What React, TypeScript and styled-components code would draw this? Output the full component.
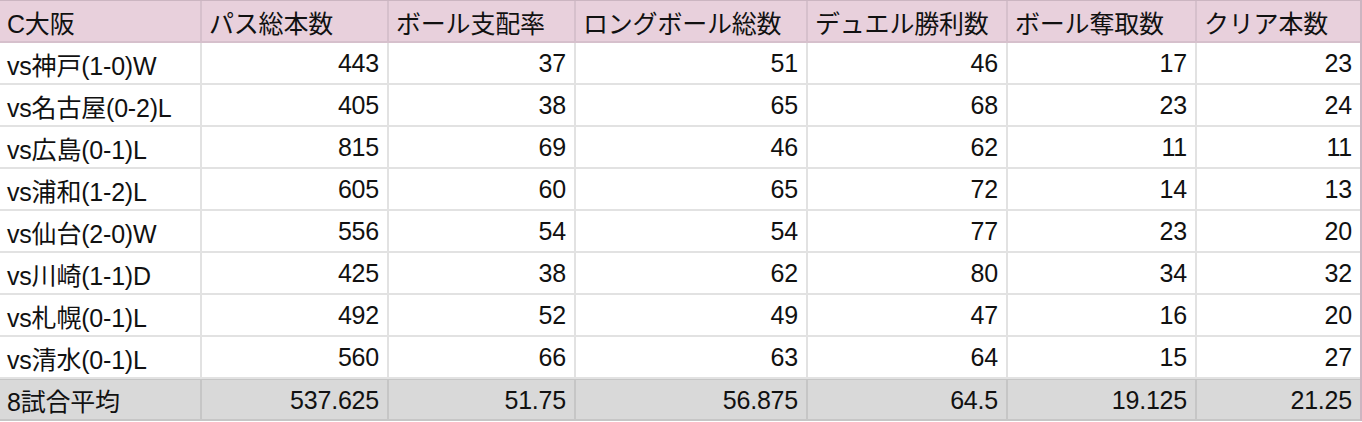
import styled, { createGlobalStyle } from "styled-components";

const GlobalStyle = createGlobalStyle`
  body {
    margin: 0;
    background: #ffffff;
    font-family: "Liberation Sans", "Noto Sans CJK JP", sans-serif;
  }
`;

const columns = [202, 187, 187, 232, 200, 189, 163];

const headers = ["C大阪", "パス総本数", "ボール支配率", "ロングボール総数", "デュエル勝利数", "ボール奪取数", "クリア本数"];

const rows: (string | number)[][] = [
    ["vs神戸(1-0)W", 443, 37, 51, 46, 17, 23],
    ["vs名古屋(0-2)L", 405, 38, 65, 68, 23, 24],
    ["vs広島(0-1)L", 815, 69, 46, 62, 11, 11],
    ["vs浦和(1-2)L", 605, 60, 65, 72, 14, 13],
    ["vs仙台(2-0)W", 556, 54, 54, 77, 23, 20],
    ["vs川崎(1-1)D", 425, 38, 62, 80, 34, 32],
    ["vs札幌(0-1)L", 492, 52, 49, 47, 16, 20],
    ["vs清水(0-1)L", 560, 66, 63, 64, 15, 27],
];

const average = ["8試合平均", "537.625", "51.75", "56.875", "64.5", "19.125", "21.25"];

const Sheet = styled.div({
    display: 'grid',
    gridTemplateColumns: columns.map(c => `${c}px`).join(' '),
    width: '1360px',
    borderTop: '1px solid #cbb5c1',
    borderRight: '2px solid #cbb5c1',
})

type Variant = 'head' | 'body' | 'total';

interface ICellProps {
    variant: Variant;
    numeric?: boolean;
    last?: boolean;
}

const backgrounds: Record<Variant, string> = {
    head: '#e8d0dc',
    body: '#ffffff',
    total: '#d9d9d9',
}

const lines: Record<Variant, string> = {
    head: '#d6c0cc',
    body: '#e2e2e2',
    total: '#c6c6c6',
}

const Cell = styled.div<ICellProps>(({ variant, numeric, last }: ICellProps) => ({
    height: '42px',
    boxSizing: 'border-box',
    display: 'flex',
    alignItems: 'center',
    justifyContent: numeric ? 'flex-end' : 'flex-start',
    padding: numeric ? '1px 8px 0 6px' : '1px 6px 0 7px',
    fontSize: '25px',
    letterSpacing: '-0.2px',
    color: '#111111',
    whiteSpace: 'nowrap',
    backgroundColor: backgrounds[variant],
    borderBottom: `2px solid ${lines[variant]}`,
    borderRight: last ? 'none' : `2px solid ${lines[variant]}`,
    borderTop: variant === 'total' ? '1px solid #c6c6c6' : 'none',
}))

export default function App() {
    return <>
        <GlobalStyle/>
        <Sheet>
            {headers.map((h, i) => (
                <Cell key={`h${i}`} variant="head" last={i === headers.length - 1}>{h}</Cell>
            ))}
            {rows.map((row, r) => row.map((v, i) => (
                <Cell key={`${r}-${i}`} variant="body" numeric={i > 0} last={i === row.length - 1}>{v}</Cell>
            )))}
            {average.map((v, i) => (
                <Cell key={`a${i}`} variant="total" numeric={i > 0} last={i === average.length - 1}>{v}</Cell>
            ))}
        </Sheet>
    </>
}
